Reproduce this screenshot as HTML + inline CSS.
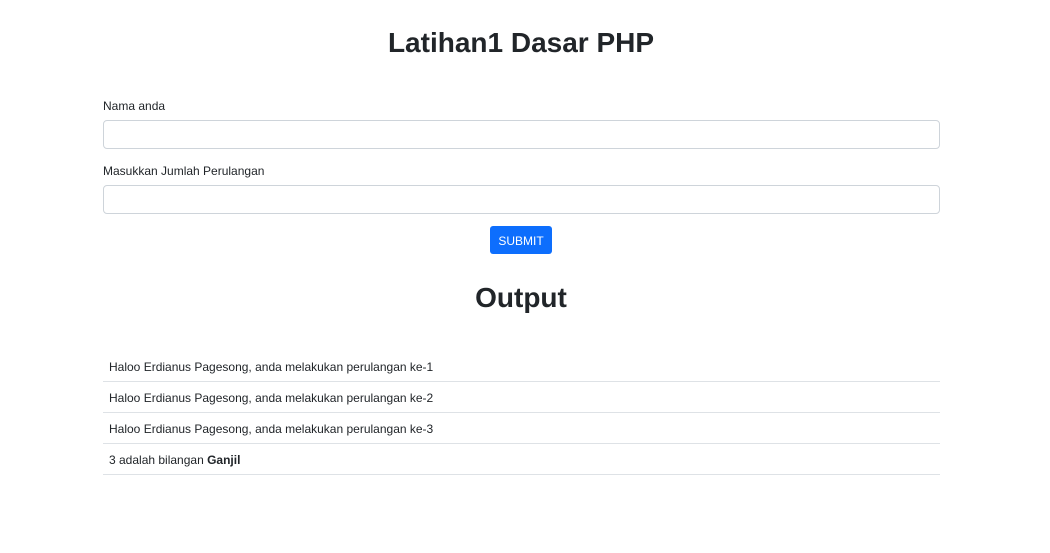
<!DOCTYPE html>
<html><head><meta charset="utf-8"><style>
body{margin:0;width:1050px;height:553px;background:#fff;font-family:"Liberation Sans",sans-serif;color:#212529;position:relative;overflow:hidden}
.a{position:absolute}
h1{position:absolute;margin:0;left:0;width:1042px;text-align:center;font-weight:600;font-size:28px;line-height:34px}
.lbl{font-size:12px;left:103px}
.inp{left:103px;width:835px;height:27px;border:1px solid #ced4da;border-radius:4px}
.btn{left:490px;top:226px;width:62px;height:28px;background:#0d6efd;border-radius:3px;color:#fff;font-size:12px;line-height:30px;text-align:center}
.row{left:103px;width:837px;height:30px;border-bottom:1px solid #dee2e6;font-size:12px;line-height:32px;box-sizing:content-box}
.row span{padding-left:6px}
</style></head><body>
<h1 style="top:26px">Latihan1 Dasar PHP</h1>
<div class="a lbl" style="top:99px">Nama anda</div>
<div class="a inp" style="top:120px"></div>
<div class="a lbl" style="top:164px">Masukkan Jumlah Perulangan</div>
<div class="a inp" style="top:185px"></div>
<div class="a btn">SUBMIT</div>
<h1 style="top:281px">Output</h1>
<div class="a row" style="top:351px"><span>Haloo Erdianus Pagesong, anda melakukan perulangan ke-1</span></div>
<div class="a row" style="top:382px"><span>Haloo Erdianus Pagesong, anda melakukan perulangan ke-2</span></div>
<div class="a row" style="top:413px"><span>Haloo Erdianus Pagesong, anda melakukan perulangan ke-3</span></div>
<div class="a row" style="top:444px"><span>3 adalah bilangan <b>Ganjil</b></span></div>
</body></html>
